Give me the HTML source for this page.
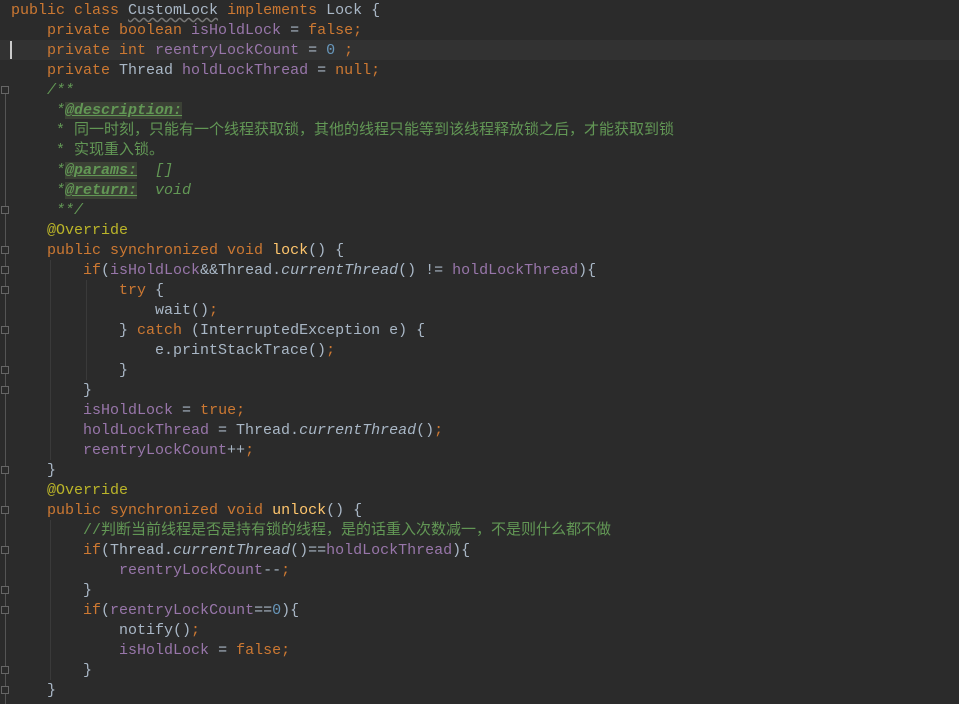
<!DOCTYPE html>
<html><head><meta charset="utf-8"><style>
html,body{margin:0;padding:0;background:#2b2b2b;width:959px;height:704px;overflow:hidden}
#c{position:absolute;left:11px;top:1px;font-family:"Liberation Mono","Noto Sans CJK SC",monospace;font-size:15px;line-height:20px;color:#a9b7c6;white-space:pre}
.k{color:#cc7832}.f{color:#9876aa}.m{color:#ffc66d}.n{color:#6897bb}.i{font-style:italic}
.a{color:#bbb529}.g{color:#629755}.gi{color:#629755;font-style:italic}
.t{color:#629755;font-style:italic;font-weight:bold;text-decoration:underline;background:#3b4135}
.cj{letter-spacing:0px}
.u{text-decoration:underline wavy #777;text-underline-offset:3px}
.cl{position:absolute;left:0;top:40px;width:959px;height:20px;background:#323232}
.car{position:absolute;left:10px;top:41px;width:2px;height:18px;background:#ccc}
.gl{position:absolute;left:5px;top:88px;width:1px;height:616px;background:#555}
.fm{position:absolute;left:1px;width:8px;height:8px;border:1px solid #666;background:#2b2b2b;box-sizing:border-box}
.ig{position:absolute;width:1px;background:#3a3a3a}
</style></head><body>
<div class="cl"></div>
<div class="gl"></div>
<div class="ig" style="left:50px;top:260px;height:200px"></div>
<div class="ig" style="left:86px;top:280px;height:100px"></div>
<div class="ig" style="left:50px;top:520px;height:160px"></div>
<div class="fm" style="top:86px"></div>
<div class="fm" style="top:206px"></div>
<div class="fm" style="top:246px"></div>
<div class="fm" style="top:266px"></div>
<div class="fm" style="top:286px"></div>
<div class="fm" style="top:326px"></div>
<div class="fm" style="top:366px"></div>
<div class="fm" style="top:386px"></div>
<div class="fm" style="top:466px"></div>
<div class="fm" style="top:506px"></div>
<div class="fm" style="top:546px"></div>
<div class="fm" style="top:586px"></div>
<div class="fm" style="top:606px"></div>
<div class="fm" style="top:666px"></div>
<div class="fm" style="top:686px"></div>
<div class="car"></div>
<div id="c"><span class="k">public class </span><span class="u">CustomLock</span> <span class="k">implements </span>Lock {
    <span class="k">private boolean </span><span class="f">isHoldLock </span>= <span class="k">false;</span>
    <span class="k">private int </span><span class="f">reentryLockCount </span>= <span class="n">0 </span><span class="k">;</span>
    <span class="k">private </span>Thread <span class="f">holdLockThread </span>= <span class="k">null;</span>
<span class="gi">    /**</span>
<span class="gi">     *</span><span class="t">@description:</span>
<span class="g">     * <span class="cj">同一时刻，只能有一个线程获取锁，其他的线程只能等到该线程释放锁之后，才能获取到锁</span></span>
<span class="g">     * <span class="cj">实现重入锁。</span></span>
<span class="gi">     *</span><span class="t">@params:</span><span class="gi">  []</span>
<span class="gi">     *</span><span class="t">@return:</span><span class="gi">  void</span>
<span class="gi">     **/</span>
    <span class="a">@Override</span>
    <span class="k">public synchronized void </span><span class="m">lock</span>() {
        <span class="k">if</span>(<span class="f">isHoldLock</span>&amp;&amp;Thread.<span class="i">currentThread</span>() != <span class="f">holdLockThread</span>){
            <span class="k">try </span>{
                wait()<span class="k">;</span>
            } <span class="k">catch </span>(InterruptedException e) {
                e.printStackTrace()<span class="k">;</span>
            }
        }
        <span class="f">isHoldLock </span>= <span class="k">true;</span>
        <span class="f">holdLockThread </span>= Thread.<span class="i">currentThread</span>()<span class="k">;</span>
        <span class="f">reentryLockCount</span>++<span class="k">;</span>
    }
    <span class="a">@Override</span>
    <span class="k">public synchronized void </span><span class="m">unlock</span>() {
        <span class="g">//<span class="cj">判断当前线程是否是持有锁的线程，是的话重入次数减一，不是则什么都不做</span></span>
        <span class="k">if</span>(Thread.<span class="i">currentThread</span>()==<span class="f">holdLockThread</span>){
            <span class="f">reentryLockCount</span>--<span class="k">;</span>
        }
        <span class="k">if</span>(<span class="f">reentryLockCount</span>==<span class="n">0</span>){
            notify()<span class="k">;</span>
            <span class="f">isHoldLock </span>= <span class="k">false;</span>
        }
    }</div>
</body></html>
